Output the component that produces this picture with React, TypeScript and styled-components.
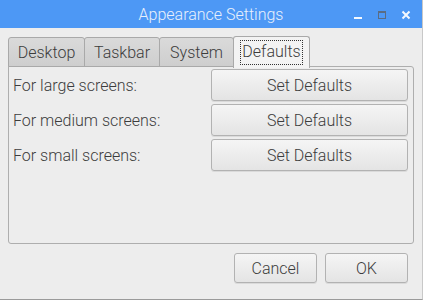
import { createGlobalStyle } from "styled-components";
import styled from "styled-components";

const GlobalStyle = createGlobalStyle`
  html, body {
    margin: 0;
    padding: 0;
    background: #ededed;
  }
  body {
    font-family: Roboto, "Liberation Sans", sans-serif;
    font-weight: 300;
  }
`;

const Window = styled.div`
  width: 423px;
  height: 300px;
  box-sizing: border-box;
  background: #ededed;
  border-right: 1px solid #c8c8c8;
  border-bottom: 1px solid #9a9a9a;
  display: flex;
  flex-direction: column;
`;

const TitleBar = styled.div`
  height: 28px;
  flex: none;
  background: #4d98f5;
  position: relative;
  display: flex;
  align-items: center;
  justify-content: center;
`;

const Title = styled.div`
  color: #e8f0fc;
  font-size: 16px;
  font-weight: 300;
`;

const Controls = styled.div`
  position: absolute;
  right: 4px;
  top: 0;
  height: 28px;
  display: flex;
  align-items: center;
`;

const ControlBtn = styled.div`
  width: 24px;
  height: 28px;
  box-sizing: border-box;
  padding-top: 2px;
  display: flex;
  align-items: center;
  justify-content: center;
`;

const Body = styled.div`
  flex: 1;
  display: flex;
  flex-direction: column;
  padding: 8px 8px 0 8px;
`;

const TabRow = styled.div`
  display: flex;
  align-items: flex-end;
  height: 31px;
  position: relative;
  z-index: 1;
  margin-bottom: -1px;
`;

const Tab = styled.div<{ $active?: boolean; $w: number }>`
  box-sizing: border-box;
  height: ${({ $active }) => ($active ? "32px" : "30px")};
  margin-bottom: ${({ $active }) => ($active ? "-1px" : "0")};
  width: ${({ $w }) => $w}px;
  border: 1px solid #a9a9a9;
  border-bottom: ${({ $active }) => ($active ? "none" : "1px solid #a9a9a9")};
  margin-left: -1px;
  &:first-child {
    margin-left: 0;
  }
  border-radius: 3px 3px 0 0;
  background: ${({ $active }) =>
    $active ? "#f3f3f3" : "linear-gradient(#dadada, #cecece)"};
  color: #3c3c3c;
  font-size: 16px;
  display: flex;
  align-items: center;
  justify-content: center;
`;

const Focus = styled.span`
  border: 1px dotted #333;
  padding: 1px 1px 2px;
  line-height: 20px;
`;

const Panel = styled.div`
  height: 178px;
  box-sizing: border-box;
  border: 1px solid #aeaeae;
  border-radius: 0 3px 3px 3px;
  background: #ededed;
  padding: 2px 5px 0 4px;
  display: grid;
  grid-template-columns: 1fr 197px;
  grid-auto-rows: 32px;
  row-gap: 3px;
  align-content: start;
  align-items: center;
`;

const Label = styled.div`
  color: #3c3c3c;
  font-size: 16px;
`;

const Button = styled.button<{ $w?: number }>`
  box-sizing: border-box;
  height: 100%;
  width: ${({ $w }) => ($w ? `${$w}px` : "100%")};
  border: 1px solid #b2b2b2;
  border-radius: 3px;
  background: linear-gradient(#f5f5f5, #e4e4e4);
  box-shadow: 0 1px 0 rgba(0, 0, 0, 0.08);
  color: #3c3c3c;
  font-family: Roboto, "Liberation Sans", sans-serif;
  font-weight: 300;
  font-size: 16px;
  padding: 0;
`;

const Footer = styled.div`
  display: flex;
  justify-content: flex-end;
  gap: 8px;
  padding: 9px 6px 0 0;
  height: 30px;
`;

export default function App() {
  return (
    <Window>
      <GlobalStyle />
      <TitleBar>
        <Title>Appearance Settings</Title>
        <Controls>
          <ControlBtn>
            <svg width="10" height="10" viewBox="0 0 10 10">
              <rect x="1" y="7" width="8" height="2" fill="#f4f8fe" />
            </svg>
          </ControlBtn>
          <ControlBtn>
            <svg width="10" height="10" viewBox="0 0 10 10">
              <rect x="1.5" y="1.5" width="7" height="7" fill="none" stroke="#5a6c84" strokeWidth="1" />
              <rect x="1" y="1" width="8" height="2" fill="#5a6c84" />
            </svg>
          </ControlBtn>
          <ControlBtn>
            <svg width="10" height="10" viewBox="0 0 10 10">
              <path d="M1.5 1.5 L8.5 8.5 M8.5 1.5 L1.5 8.5" stroke="#f4f8fe" strokeWidth="2" />
            </svg>
          </ControlBtn>
        </Controls>
      </TitleBar>
      <Body>
        <TabRow>
          <Tab $w={77}>Desktop</Tab>
          <Tab $w={76}>Taskbar</Tab>
          <Tab $w={75}>System</Tab>
          <Tab $w={77} $active>
            <Focus>Defaults</Focus>
          </Tab>
        </TabRow>
        <Panel>
          <Label>For large screens:</Label>
          <Button>Set Defaults</Button>
          <Label>For medium screens:</Label>
          <Button>Set Defaults</Button>
          <Label>For small screens:</Label>
          <Button>Set Defaults</Button>
        </Panel>
        <Footer>
          <Button $w={83}>Cancel</Button>
          <Button $w={83}>OK</Button>
        </Footer>
      </Body>
    </Window>
  );
}
